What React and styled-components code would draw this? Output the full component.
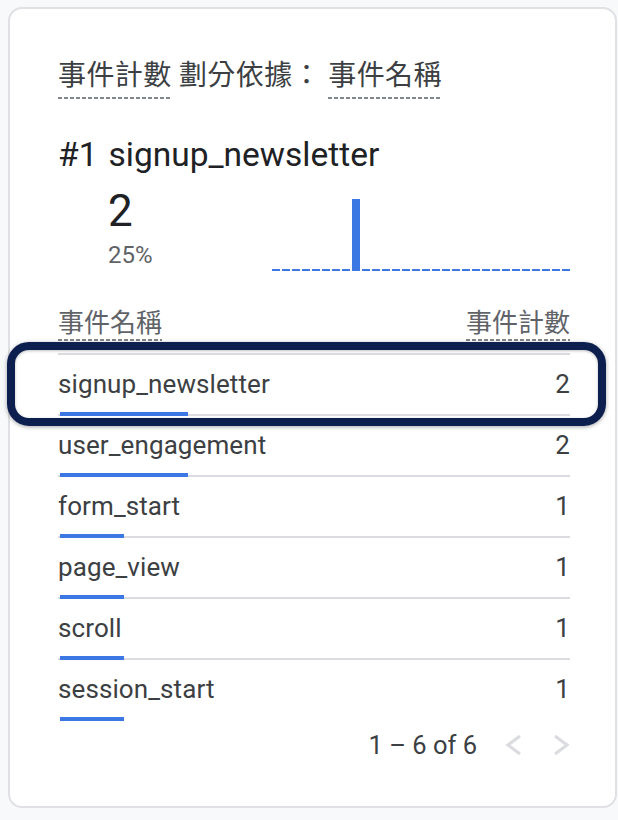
import React from 'react';
import styled, { createGlobalStyle } from 'styled-components';

const Global = createGlobalStyle`
  html, body { margin: 0; padding: 0; background: #f8f9fa; }
  body { font-family: Roboto, "Noto Sans CJK TC", sans-serif; -webkit-font-smoothing: antialiased; }
`;

const Page = styled.div`
  padding: 7px 1px 12px 8px;
`;

const Card = styled.section`
  box-sizing: border-box;
  height: 801px;
  background: #fff;
  border: 2px solid #dfe1e5;
  border-radius: 14px;
  padding: 49px 45px 0 48px;
  display: flex;
  flex-direction: column;
`;

const Title = styled.div`
  font-family: Roboto, "Noto Sans CJK TC", sans-serif;
  font-size: 28px;
  line-height: 36px;
  letter-spacing: 0.4px;
  color: #3c4043;
  white-space: nowrap;
`;

const Dotted = styled.span`
  display: inline-block;
  padding-bottom: ${p => p.$pad || 5}px;
  background-image: linear-gradient(to right, #80868b 70%, transparent 70%);
  background-size: 6px 2px;
  background-repeat: repeat-x;
  background-position: left bottom;
`;

const Heading = styled.h2`
  margin: 36px 0 0;
  font-family: Roboto, sans-serif;
  font-weight: 400;
  font-size: 33.5px;
  line-height: 40px;
  color: #202124;
  display: flex;
  gap: 11px;
`;

const StatRow = styled.div`
  margin-top: 12px;
  display: flex;
  align-items: flex-end;
  padding-left: 50px;
`;

const Stat = styled.div`
  width: 164px;
  padding-bottom: 3px;
  display: flex;
  flex-direction: column;
`;

const BigNumber = styled.div`
  font-size: 44px;
  line-height: 48px;
  color: #202124;
`;

const Percent = styled.div`
  margin-top: 6px;
  font-size: 24px;
  line-height: 28px;
  color: #5f6368;
`;

const Chart = styled.svg`
  flex: 1;
  height: 73px;
  display: block;
`;

const TableHead = styled.div`
  margin-top: 35px;
  display: flex;
  justify-content: space-between;
  align-items: flex-end;
  padding-bottom: 12px;
  border-bottom: 2px solid #dadce0;
  font-size: 26px;
  line-height: 32px;
  color: #5f6368;
`;

const Row = styled.div`
  position: relative;
  padding-top: 13px;
  display: flex;
  flex-direction: column;
`;

const RowLine = styled.div`
  display: flex;
  justify-content: space-between;
  font-size: 26px;
  line-height: 32px;
  letter-spacing: 0.1px;
  color: #3c4043;
  margin-bottom: 12px;
`;

const Track = styled.div`
  position: relative;
  height: 4px;
  background: ${p => (p.$last ? 'transparent' : 'linear-gradient(to bottom, transparent 2px, #dadce0 2px)')};
`;

const Fill = styled.div`
  position: absolute;
  left: 2px;
  top: 0;
  bottom: 0;
  background: #3b78e3;
`;

const Highlight = styled.div`
  position: absolute;
  top: -13px;
  left: -51px;
  right: -36px;
  bottom: -10px;
  border: 8px solid #0c1f4e;
  border-radius: 22px;
  box-shadow: 0 1px 4px rgba(0, 0, 0, 0.35), inset 0 1px 3px rgba(0, 0, 0, 0.25);
  pointer-events: none;
`;

const Pager = styled.div`
  height: 48px;
  display: flex;
  justify-content: flex-end;
  align-items: center;
  font-size: 25.5px;
  color: #3c4043;
`;

const PagerText = styled.span`
  margin-right: 28px;
`;

const NavButton = styled.button`
  border: none;
  background: none;
  padding: 0;
  margin-left: ${p => p.$gap || 0}px;
  width: 17px;
  height: 22px;
  display: flex;
  align-items: center;
  justify-content: center;
  color: #dadce0;
`;

const Chevron = ({ dir }) => (
  <svg width="17" height="22" viewBox="0 0 17 22">
    <polyline
      points={dir === 'left' ? '15,2 3,11 15,20' : '2,2 14,11 2,20'}
      fill="none"
      stroke="currentColor"
      strokeWidth="3.2"
    />
  </svg>
);

const rows = [
  { name: 'signup_newsletter', count: 2 },
  { name: 'user_engagement', count: 2 },
  { name: 'form_start', count: 1 },
  { name: 'page_view', count: 1 },
  { name: 'scroll', count: 1 },
  { name: 'session_start', count: 1 },
];
const total = rows.reduce((s, r) => s + r.count, 0);

export default function App() {
  return (
    <Page>
      <Global />
      <Card>
        <Title>
          <Dotted>事件計數</Dotted> 劃分依據： <Dotted>事件名稱</Dotted>
        </Title>
        <Heading>
          <span>#1</span>
          <span>signup_newsletter</span>
        </Heading>
        <StatRow>
          <Stat>
            <BigNumber>2</BigNumber>
            <Percent>25%</Percent>
          </Stat>
          <Chart viewBox="0 0 298 73" preserveAspectRatio="none">
            <line x1="0" y1="71" x2="298" y2="71" stroke="#3b78e3" strokeWidth="2" strokeDasharray="8 2" />
            <rect x="80" y="0" width="8" height="72" fill="#3b78e3" />
          </Chart>
        </StatRow>
        <TableHead>
          <Dotted $pad={2}>事件名稱</Dotted>
          <Dotted $pad={2}>事件計數</Dotted>
        </TableHead>
        {rows.map((r, i) => (
          <Row key={r.name}>
            <RowLine>
              <span>{r.name}</span>
              <span>{r.count}</span>
            </RowLine>
            <Track $last={i === rows.length - 1}>
              <Fill style={{ width: `${(r.count / total) * 100}%` }} />
            </Track>
            {i === 0 && <Highlight />}
          </Row>
        ))}
        <Pager>
          <PagerText>1 – 6 of 6</PagerText>
          <NavButton aria-label="previous"><Chevron dir="left" /></NavButton>
          <NavButton $gap={31} aria-label="next"><Chevron dir="right" /></NavButton>
        </Pager>
      </Card>
    </Page>
  );
}
